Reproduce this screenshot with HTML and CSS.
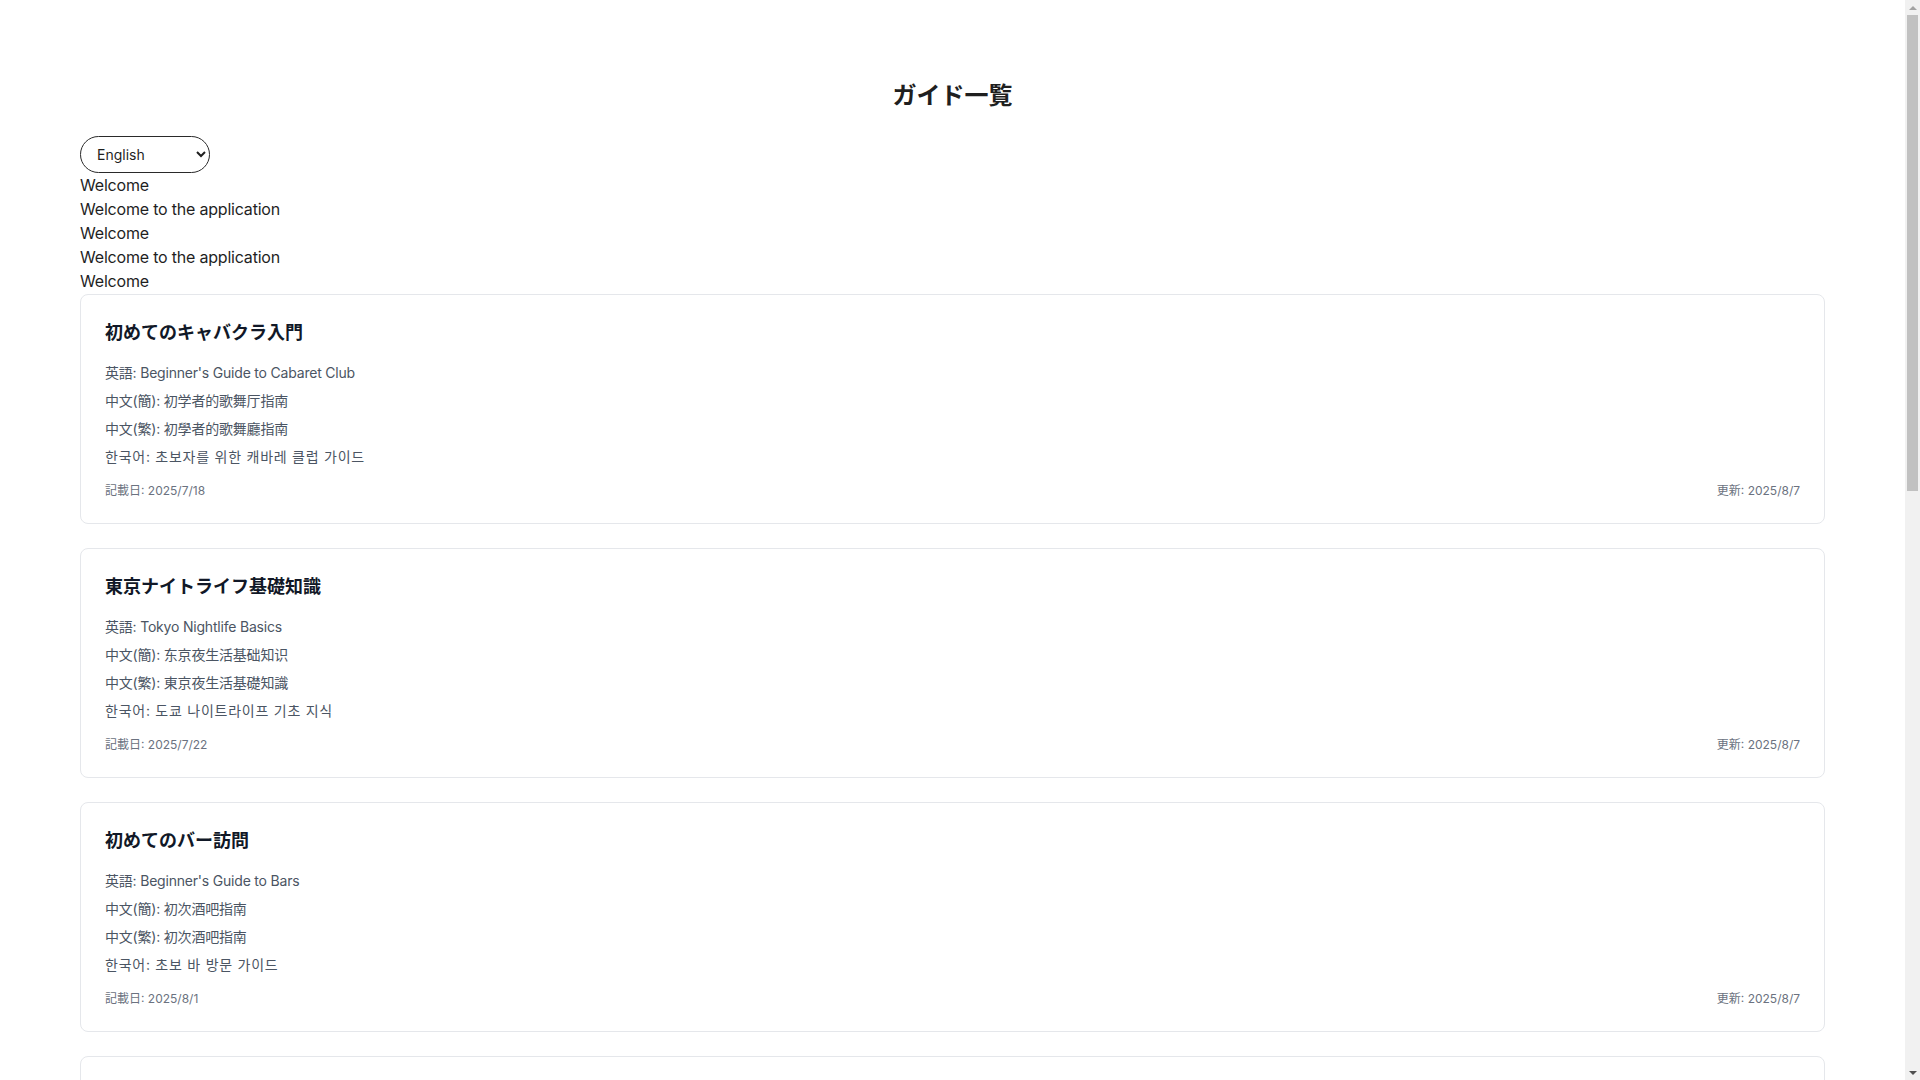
FILE: index.html
```html
<!DOCTYPE html>
<html lang="ja">
<head>
<meta charset="utf-8">
<title>ガイド一覧</title>
<link rel="stylesheet" href="styles.css">
</head>
<body>
<main class="page">
  <h1 class="page-title">ガイド一覧</h1>
  <select class="lang-select">
    <option>English</option>
    <option>日本語</option>
    <option>简体中文</option>
    <option>繁體中文</option>
    <option>한국어</option>
  </select>
  <div class="welcome">
    <div>Welcome</div>
    <div>Welcome to the application</div>
    <div>Welcome</div>
    <div>Welcome to the application</div>
    <div>Welcome</div>
  </div>
  <div class="guide-list">
    <article class="guide-card">
      <h2 class="guide-title">初めてのキャバクラ入門</h2>
      <ul class="translations">
        <li>英語: Beginner's Guide to Cabaret Club</li>
        <li>中文(簡): 初学者的歌舞厅指南</li>
        <li>中文(繁): 初學者的歌舞廳指南</li>
        <li class="ko" lang="ko">한국어: 초보자를 위한 캐바레 클럽 가이드</li>
      </ul>
      <div class="meta"><span>記載日: 2025/7/18</span><span>更新: 2025/8/7</span></div>
    </article>
    <article class="guide-card">
      <h2 class="guide-title">東京ナイトライフ基礎知識</h2>
      <ul class="translations">
        <li>英語: Tokyo Nightlife Basics</li>
        <li>中文(簡): 东京夜生活基础知识</li>
        <li>中文(繁): 東京夜生活基礎知識</li>
        <li class="ko" lang="ko">한국어: 도쿄 나이트라이프 기초 지식</li>
      </ul>
      <div class="meta"><span>記載日: 2025/7/22</span><span>更新: 2025/8/7</span></div>
    </article>
    <article class="guide-card">
      <h2 class="guide-title">初めてのバー訪問</h2>
      <ul class="translations">
        <li>英語: Beginner's Guide to Bars</li>
        <li>中文(簡): 初次酒吧指南</li>
        <li>中文(繁): 初次酒吧指南</li>
        <li class="ko" lang="ko">한국어: 초보 바 방문 가이드</li>
      </ul>
      <div class="meta"><span>記載日: 2025/8/1</span><span>更新: 2025/8/7</span></div>
    </article>
    <article class="guide-card">
      <h2 class="guide-title">ホストクラブの楽しみ方</h2>
      <ul class="translations">
        <li>英語: How to Enjoy Host Clubs</li>
        <li>中文(簡): 如何享受男公关俱乐部</li>
        <li>中文(繁): 如何享受男公關俱樂部</li>
        <li class="ko" lang="ko">한국어: 호스트 클럽 즐기는 방법</li>
      </ul>
      <div class="meta"><span>記載日: 2025/8/2</span><span>更新: 2025/8/7</span></div>
    </article>
    <article class="guide-card">
      <h2 class="guide-title">料金システムの基本</h2>
      <ul class="translations">
        <li>英語: Basics of Pricing Systems</li>
        <li>中文(簡): 收费系统基础</li>
        <li>中文(繁): 收費系統基礎</li>
        <li class="ko" lang="ko">한국어: 요금 시스템의 기본</li>
      </ul>
      <div class="meta"><span>記載日: 2025/8/3</span><span>更新: 2025/8/7</span></div>
    </article>
    <article class="guide-card">
      <h2 class="guide-title">夜の街のマナー</h2>
      <ul class="translations">
        <li>英語: Nightlife Etiquette</li>
        <li>中文(簡): 夜生活礼仪</li>
        <li>中文(繁): 夜生活禮儀</li>
        <li class="ko" lang="ko">한국어: 밤거리 매너</li>
      </ul>
      <div class="meta"><span>記載日: 2025/8/4</span><span>更新: 2025/8/7</span></div>
    </article>
    <article class="guide-card">
      <h2 class="guide-title">安全に楽しむためのポイント</h2>
      <ul class="translations">
        <li>英語: Tips for Enjoying Safely</li>
        <li>中文(簡): 安全享乐的要点</li>
        <li>中文(繁): 安全享樂的要點</li>
        <li class="ko" lang="ko">한국어: 안전하게 즐기기 위한 포인트</li>
      </ul>
      <div class="meta"><span>記載日: 2025/8/5</span><span>更新: 2025/8/7</span></div>
    </article>
    <article class="guide-card">
      <h2 class="guide-title">エリア別ガイド：歌舞伎町</h2>
      <ul class="translations">
        <li>英語: Area Guide: Kabukicho</li>
        <li>中文(簡): 区域指南：歌舞伎町</li>
        <li>中文(繁): 區域指南：歌舞伎町</li>
        <li class="ko" lang="ko">한국어: 지역 가이드: 가부키초</li>
      </ul>
      <div class="meta"><span>記載日: 2025/8/6</span><span>更新: 2025/8/7</span></div>
    </article>
  </div>
</main>
<div class="scrollbar" aria-hidden="true">
  <div class="sb-arrow sb-up"></div>
  <div class="sb-track"><div class="sb-thumb"></div></div>
  <div class="sb-arrow sb-down"></div>
</div>
</body>
</html>
```

FILE: styles.css
```css
html, body {
  margin: 0;
  padding: 0;
  background: #ffffff;
}

body {
  font-family: "Inter", "Noto Sans CJK JP", "Noto Sans CJK KR", sans-serif;
  color: #1f1f1f;
  font-size: 16px;
  line-height: 24px;
  letter-spacing: -0.2px;
  padding-right: 15px;
}

.page {
  padding: 80px;
}

.page-title {
  margin: 0 0 24px;
  text-align: center;
  font-size: 24px;
  line-height: 32px;
  font-weight: 700;
  color: #1f1f1f;
  letter-spacing: 0;
}

.lang-select {
  display: block;
  width: 130px;
  height: 37px;
  padding: 0 10px 0 12px;
  font-family: "Inter", sans-serif;
  font-size: 14px;
  color: #1f1f1f;
  background: #ffffff;
  border: 1px solid #2a2a2a;
  border-radius: 9999px;
}

.welcome {
  font-size: 16px;
  line-height: 24px;
  color: #1f1f1f;
}

.guide-list {
  display: flex;
  flex-direction: column;
  gap: 24px;
  margin-top: 1px;
}

.guide-card {
  border: 1px solid #e5e7eb;
  border-radius: 8px;
  padding: 24px;
  background: #ffffff;
}

.guide-title {
  margin: 0 0 16px;
  font-size: 18px;
  line-height: 28px;
  font-weight: 700;
  color: #111827;
  letter-spacing: 0;
}

.translations {
  list-style: none;
  margin: 0;
  padding: 0;
  display: flex;
  flex-direction: column;
  gap: 8px;
  font-size: 14px;
  line-height: 20px;
  color: #4b5563;
}

.translations .ko {
  font-family: "Inter", "Noto Sans CJK KR", sans-serif;
  letter-spacing: 0.75px;
}

.meta {
  margin-top: 16px;
  display: flex;
  justify-content: space-between;
  font-size: 12px;
  line-height: 16px;
  color: #6b7280;
  letter-spacing: 0;
}

/* window scrollbar overlay */
.scrollbar {
  position: fixed;
  top: 0;
  right: 0;
  width: 15px;
  height: 100vh;
  background: #f1f1f1;
  display: flex;
  flex-direction: column;
}

.sb-arrow {
  height: 15px;
  flex: 0 0 15px;
  display: flex;
  align-items: center;
  justify-content: center;
}

.sb-up::before {
  content: "";
  border-left: 4px solid transparent;
  border-right: 4px solid transparent;
  border-bottom: 4px solid #a3a3a3;
}

.sb-down::before {
  content: "";
  border-left: 4px solid transparent;
  border-right: 4px solid transparent;
  border-top: 4px solid #505050;
}

.sb-track {
  flex: 1;
  padding: 0 2px;
}

.sb-thumb {
  height: 476px;
  background: #c1c1c1;
}
```
